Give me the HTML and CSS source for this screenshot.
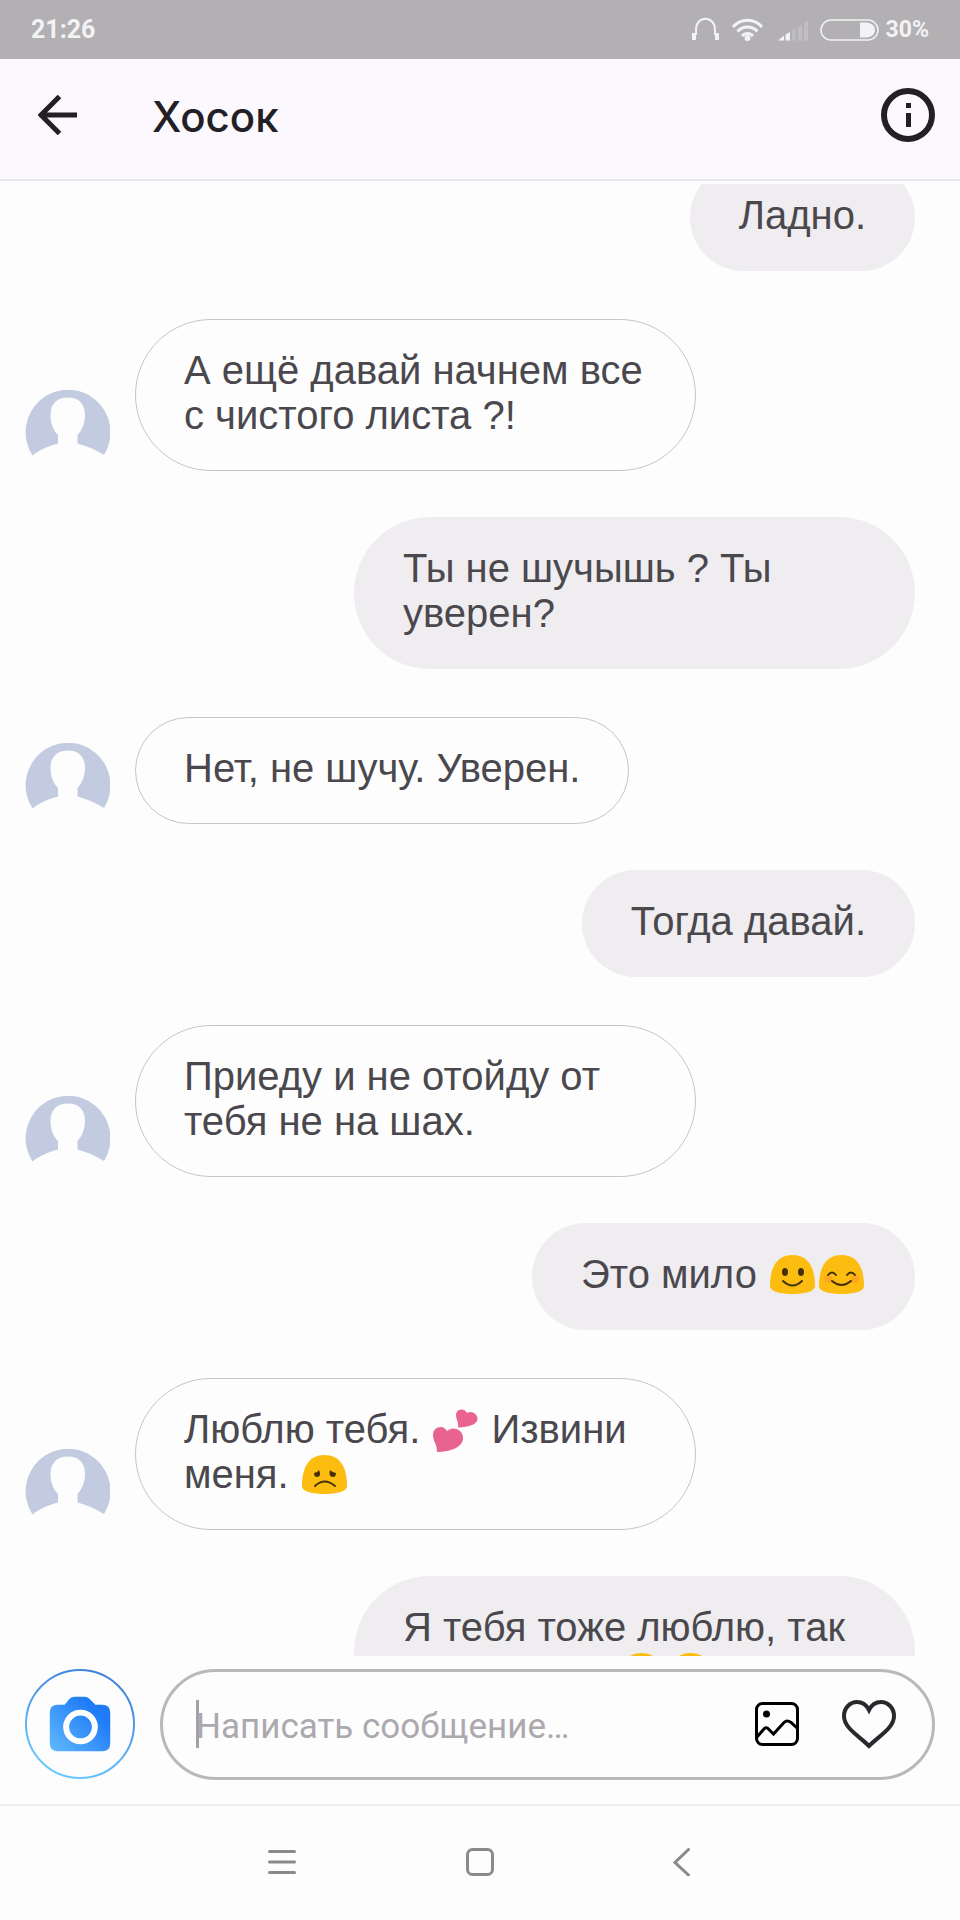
FILE: index.html
```html
<!DOCTYPE html>
<html lang="ru">
<head>
    <meta charset="UTF-8">
    <meta name="viewport" content="width=device-width, initial-scale=1.0">
    <title>Хосок</title>
    <link rel="stylesheet" href="styles.css">
</head>
<body>
    <svg class="sprite" aria-hidden="true">
        <symbol id="avatar" viewBox="0 0 85 85">
            <path fill="#c3cbe1" d="M7.500 65.500A42.500 42.500 0 1 1 79 65C71 60 62 56 52.500 53.500V45C57 40 60 33 60 25C60 13 53 7.500 43 7.500S25.500 13 25.500 25C25.500 33 28 40 33 45V53.500C23 56 14 60 7.500 65.500Z"/>
        </symbol>
        <symbol id="blob" viewBox="0 0 45 39">
            <path fill="#fdbd10" d="M22.500 0C7 0 0 12 0 31C0 37 12 39 22.500 39S45 37 45 31C45 12 38 0 22.500 0Z"/>
        </symbol>
        <symbol id="smile" viewBox="0 0 45 39">
            <use href="#blob"/>
            <ellipse cx="15" cy="17" rx="3" ry="4" fill="#453209"/>
            <ellipse cx="31" cy="17" rx="3" ry="4" fill="#453209"/>
            <path d="M13 26Q22.500 35 32 26" fill="none" stroke="#453209" stroke-width="2" stroke-linecap="round"/>
        </symbol>
        <symbol id="blush" viewBox="0 0 45 39">
            <use href="#blob"/>
            <circle cx="9" cy="24" r="4" fill="#ffa61f"/>
            <circle cx="36" cy="24" r="4" fill="#ffa61f"/>
            <path d="M9 20Q13 15 17 20M28 20Q32 15 36 20M13 26Q22.500 34 32 26" fill="none" stroke="#453209" stroke-width="2" stroke-linecap="round"/>
        </symbol>
        <symbol id="sad" viewBox="0 0 45 39">
            <use href="#blob"/>
            <path d="M12 18Q15 18 17 15Q20 22 15 22Q12 22 12 18ZM34 18Q31 18 28 15Q26 22 31 22Q34 22 34 18Z" fill="#453209"/>
            <path d="M13 31Q22.500 22 33 31" fill="none" stroke="#453209" stroke-width="2" stroke-linecap="round"/>
        </symbol>
        <symbol id="hearts" viewBox="0 0 45 43">
            <path fill="#e8638f" d="M4 43C4 35 0 32 0 26C0 18 10 15 14 22C20 16 31 21 30 30C29 39 16 43 4 43ZM25 18.500C26 13 23 11 23 6C23 0 31-2 34 4C38 1 45 5 44.500 10C44 16 35 18 25 18.500Z"/>
        </symbol>
    </svg>

    <div class="status-bar">
        <span class="clock">21:26</span>
        <svg class="status-icons" viewBox="0 0 188 26" width="188" height="26">
            <g fill="none" stroke="#f3f2f4">
                <path d="M5 18V13C5 -2 24 -2 24 13V18" stroke-width="2"/>
                <path d="M3 16V23M26 16V23" stroke-width="4"/>
                <path d="M42 10C50 1 63 1 71 10M46.500 14.500C52 8.500 61 8.500 66.500 14.500M51 19C54 15.500 59 15.500 62 19" stroke-width="3"/>
                <rect x="130" y="3" width="57" height="20" rx="10" stroke-width="1.500"/>
            </g>
            <circle cx="56.500" cy="21" r="3" fill="#f3f2f4"/>
            <path d="M87 23.500L93 18.500V23.500ZM94.500 17.500L99 15V23.500H94.500ZM169 5.500H175C187 5.500 187 20.500 175 20.500H169Z" fill="#f3f2f4"/>
            <path d="M101 13.500L104.500 11V23.500H101ZM107 10L111 7.500V23.500H107ZM113 6.500L117 3.500V23.500H113Z" fill="#c0bec1"/>
        </svg>
        <span class="battery">30%</span>
    </div>

    <header class="header">
        <button class="back-btn" aria-label="Назад">
            <svg viewBox="0 0 40 40" width="40" height="40"><path d="M39 20H4M21.500 1.500L3 20L21.500 38.500" fill="none" stroke="#222024" stroke-width="5"/></svg>
        </button>
        <h1 class="title">Хосок</h1>
        <button class="info-btn" aria-label="Информация">
            <svg viewBox="0 0 54 54" width="54" height="54"><circle cx="27" cy="27" r="24" fill="none" stroke="#222024" stroke-width="6"/><path d="M25 15H30V20H25ZM25 25H30V39H25Z" fill="#222024"/></svg>
        </button>
    </header>

    <main class="chat" id="chat">
        <div class="message out"><p class="bubble">Ладно.</p></div>
        <div class="message in">
            <svg class="avatar"><use href="#avatar"/></svg>
            <p class="bubble">А ещё давай начнем все с чистого листа ?!</p>
        </div>
        <div class="message out"><p class="bubble">Ты не шучышь ? Ты уверен?</p></div>
        <div class="message in">
            <svg class="avatar"><use href="#avatar"/></svg>
            <p class="bubble">Нет, не шучу. Уверен.</p>
        </div>
        <div class="message out"><p class="bubble">Тогда давай.</p></div>
        <div class="message in">
            <svg class="avatar"><use href="#avatar"/></svg>
            <p class="bubble">Приеду и не отойду от тебя не на шах.</p>
        </div>
        <div class="message out"><p class="bubble">Это мило <svg class="emoji"><use href="#smile"/></svg><svg class="emoji"><use href="#blush"/></svg></p></div>
        <div class="message in">
            <svg class="avatar"><use href="#avatar"/></svg>
            <p class="bubble">Люблю тебя. <svg class="emoji hearts"><use href="#hearts"/></svg> Извини меня. <svg class="emoji"><use href="#sad"/></svg></p>
        </div>
        <div class="message out"><p class="bubble">Я тебя тоже люблю, так что скучаю <svg class="emoji"><use href="#blush"/></svg><svg class="emoji"><use href="#blush"/></svg></p></div>
    </main>

    <form class="composer" onsubmit="event.preventDefault()">
        <button type="button" class="camera-btn" aria-label="Камера">
            <svg viewBox="0 0 111 111" width="110" height="110">
                <defs>
                    <linearGradient id="ring" x1="0.3" y1="1" x2="0.7" y2="0"><stop offset="0" stop-color="#6ccbff"/><stop offset="1" stop-color="#3c80d8"/></linearGradient>
                    <linearGradient id="body" x1="0" y1="1" x2="0.8" y2="0.3"><stop offset="0" stop-color="#62baff"/><stop offset="1" stop-color="#1f7bf6"/></linearGradient>
                </defs>
                <circle cx="55.500" cy="55.500" r="54.500" fill="none" stroke="url(#ring)" stroke-width="2"/>
                <path d="M33 36H40L45 30Q47 28 50 28H60Q63 28 65 30L71 36H78Q86 36 86 44V75Q86 83 78 83H33Q25 83 25 75V44Q25 36 33 36Z" fill="url(#body)"/>
                <circle cx="56" cy="58.500" r="14.500" fill="none" stroke="#fff" stroke-width="6"/>
            </svg>
        </button>
        <div class="field">
            <span class="caret"></span>
            <input type="text" class="text-input" placeholder="Написать сообщение…" aria-label="Написать сообщение">
            <button type="button" aria-label="Фото">
                <svg viewBox="0 0 44 44" width="44" height="44"><g fill="none" stroke="#000" stroke-width="3"><rect x="1.500" y="1.500" width="41" height="41" rx="6"/><path d="M2 35L8.500 27.500Q11 24 14 27.500L18.500 32L29 20.500Q32 17.500 36 20.500L42 26"/></g><circle cx="11.500" cy="12" r="3.500"/></svg>
            </button>
            <button type="button" aria-label="Нравится">
                <svg viewBox="0 0 56 50" width="56" height="50"><path d="M28 47C18 37 3 29 3 17C3 9 9 3 16 3C22 3 26 7 28 11C30 7 34 3 40 3C47 3 53 9 53 17C53 29 38 37 28 47Z" fill="none" stroke="#2a282c" stroke-width="4"/></svg>
            </button>
        </div>
    </form>

    <nav class="nav-bar">
        <button aria-label="Меню"><svg viewBox="0 0 28 28" width="28" height="28"><path d="M1.500 3.500H26.500M1.500 14H26.500M1.500 24.500H26.500"/></svg></button>
        <button aria-label="Домой"><svg viewBox="0 0 28 28" width="28" height="28"><rect x="1.500" y="1.500" width="25" height="25" rx="5"/></svg></button>
        <button aria-label="Назад"><svg viewBox="0 0 28 28" width="28" height="28"><path d="M24.500 1.500L11 14.500L24.500 27"/></svg></button>
    </nav>

    <script>
        document.getElementById("chat").scrollTop = 20;
    </script>
</body>
</html>
```
FILE: styles.css
```css
* {
    box-sizing: border-box;
}
body {
    margin: 0;
    height: 100vh;
    display: flex;
    flex-direction: column;
    background: #fdfdfe;
    color: #4a484d;
    font-family: "Liberation Sans", Arial, sans-serif;
}
button {
    display: flex;
    padding: 0;
    border: none;
    background: none;
    cursor: pointer;
}
.sprite {
    position: absolute;
    width: 0;
    height: 0;
}
.status-bar {
    display: flex;
    align-items: center;
    height: 59px;
    padding: 0 31px;
    background: #b2b0b3;
    color: #f3f2f4;
    font-family: Roboto, sans-serif;
    font-size: 25px;
    font-weight: 700;
}
.clock {
    margin-right: auto;
}
.status-icons {
    margin-right: 7px;
}
.battery {
    font-size: 23px;
}
.header {
    display: flex;
    align-items: center;
    height: 122px;
    padding: 0 25px 8px 38px;
    background: #fbf9fd;
    border-bottom: 2px solid #e9e7eb;
}
.title {
    flex: 1;
    margin: 4px 0 0 74px;
    color: #222024;
    font-family: Inter, sans-serif;
    font-size: 42px;
    font-weight: 500;
    line-height: 52px;
}
.chat {
    flex: 1;
    min-height: 0;
    margin-top: 3px;
    padding: 0 45px 0 25px;
    overflow-y: auto;
    scrollbar-width: none;
}
.message {
    display: flex;
    align-items: flex-end;
}
.in {
    padding: 48px 0 42px;
}
.out {
    justify-content: flex-end;
}
.avatar {
    width: 85px;
    height: 85px;
    margin-right: 25px;
}
.bubble {
    max-width: 561px;
    margin: 0;
    padding: 29px 49px 33px;
    border-radius: 76px;
    font-size: 40px;
    line-height: 45px;
}
.in .bubble {
    margin-bottom: 4px;
    padding: 28px 48px 32px;
    border: 1px solid #c6c4c8;
}
.out .bubble {
    background: #efedf0;
}
.emoji {
    width: 45px;
    height: 39px;
    margin: 0 2px;
    vertical-align: -6px;
}
.emoji.hearts {
    height: 43px;
    vertical-align: -9px;
}
.composer {
    display: flex;
    gap: 25px;
    padding: 13px 25px 24px;
}
.field {
    position: relative;
    flex: 1;
    display: flex;
    align-items: center;
    gap: 42px;
    height: 111px;
    padding: 0 35px 2px 33px;
    border: 3px solid #bab8bc;
    border-radius: 56px;
}
.caret {
    position: absolute;
    left: 33px;
    top: 28px;
    width: 3px;
    height: 48px;
    background: #a3a1a6;
}
.text-input {
    flex: 1;
    min-width: 0;
    padding: 6px 0 0;
    border: none;
    outline: none;
    background: none;
    font-family: Roboto, sans-serif;
    font-size: 35px;
}
.text-input::placeholder {
    color: #aba9ae;
}
.nav-bar {
    display: flex;
    justify-content: center;
    align-items: center;
    gap: 170px;
    height: 116px;
    padding-bottom: 2px;
    border-top: 2px solid #efeeef;
}
.nav-bar svg {
    fill: none;
    stroke: #8b898d;
    stroke-width: 3;
    stroke-linecap: round;
}
```
